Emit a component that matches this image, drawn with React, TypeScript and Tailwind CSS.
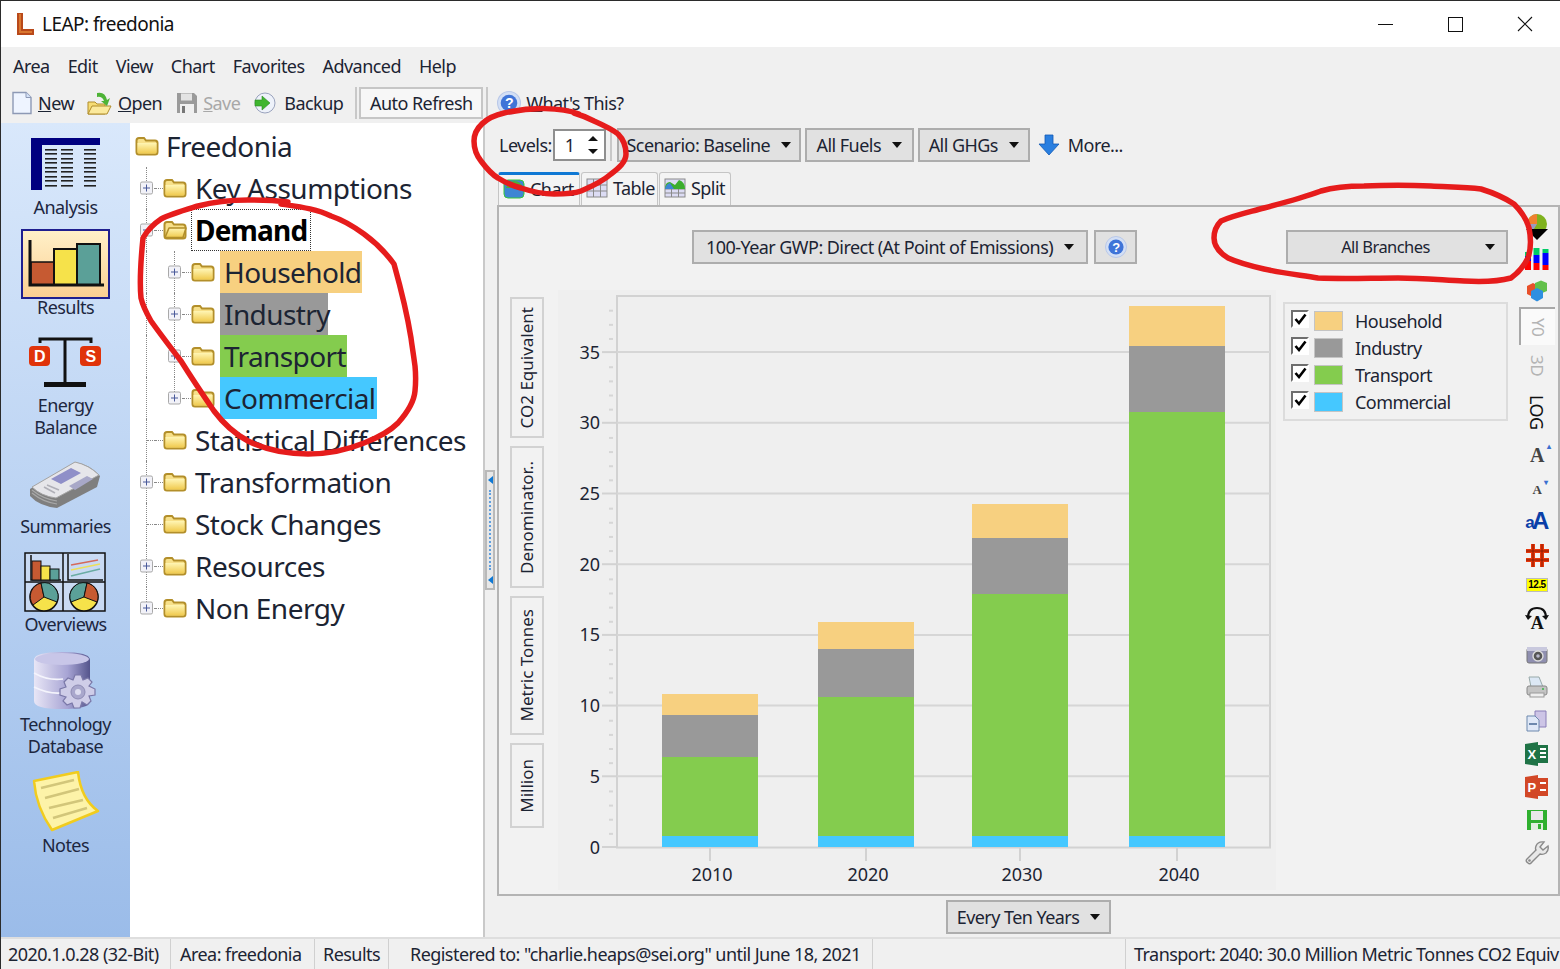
import React, { useId } from 'react';

const Caret = () => <span className="inline-block w-0 h-0 border-l-[5px] border-r-[5px] border-t-[6px] border-l-transparent border-r-transparent border-t-[#111]" />;

const Folder = ({ open = false }: { open?: boolean }) => {
  const id = useId();
  return (
    <svg width="24" height="20" viewBox="0 0 24 20" className="shrink-0">
      <defs>
        <linearGradient id={id} x1="0" y1="0" x2="0" y2="1">
          <stop offset="0" stopColor="#fff5b4" />
          <stop offset="1" stopColor="#f0ca4e" />
        </linearGradient>
      </defs>
      <path d="M1.5 4.5 Q1.5 2 4 2 H9 L11 4.5 H20 Q22.5 4.5 22.5 7 V16 Q22.5 18.5 20 18.5 H4 Q1.5 18.5 1.5 16 Z" fill="#f7e08a" stroke="#b38f2a" strokeWidth="2" />
      {open
        ? <path d="M2 17.5 L6 8 H23 L20 17.5 Z" fill={`url(#${id})`} stroke="#b38f2a" strokeWidth="1.6" strokeLinejoin="round" />
        : <path d="M2.5 7 H21.5 V16 Q21.5 17.5 20 17.5 H4 Q2.5 17.5 2.5 16 Z" fill={`url(#${id})`} />}
    </svg>
  );
};

const Expander = ({ minus = false }: { minus?: boolean }) => (
  <span className="absolute left-[1px] top-1/2 -translate-y-1/2 w-[13px] h-[13px] bg-[#f2f2f8] border border-[#a9a9a9] rounded-[2px] flex items-center justify-center">
    <span className="relative block w-[7px] h-[1px] bg-[#4a5a9a]">
      {!minus && <span className="absolute left-[3px] -top-[3px] block w-[1px] h-[7px] bg-[#4a5a9a]" />}
    </span>
  </span>
);

type Node = { label: string; expander?: boolean; minus?: boolean; bg?: string; last?: boolean };

const topNodes: Node[] = [
  { label: 'Statistical Differences' },
  { label: 'Transformation', expander: true },
  { label: 'Stock Changes' },
  { label: 'Resources', expander: true },
  { label: 'Non Energy', expander: true, last: true },
];

const subNodes: Node[] = [
  { label: 'Household', bg: 'bg-[#f7d080] w-[142px]' },
  { label: 'Industry', bg: 'bg-[#999999] w-[108px]' },
  { label: 'Transport', bg: 'bg-[#84cc4e] w-[127px]' },
  { label: 'Commercial', bg: 'bg-[#45c8ff] w-[157px]', last: true },
];

const Guide = ({ half = false, children }: { half?: boolean; children?: React.ReactNode }) => (
  <div className="relative w-[16px] h-full shrink-0">
    <span className={`absolute left-[7px] top-0 border-l border-dotted border-[#888] ${half ? 'h-1/2' : 'h-full'}`} />
    {children}
  </div>
);

const TopRow = ({ n }: { n: Node }) => (
  <div className="flex items-center h-[42px] pl-[9px]">
    <Guide half={n.last}>
      <span className="absolute left-[8px] top-1/2 w-[8px] border-t border-dotted border-[#888]" />
      {n.expander && <Expander minus={n.minus} />}
    </Guide>
    <span className="w-[8px] border-t border-dotted border-[#888]" />
    <Folder open={n.minus} />
    <span className="ml-[8px] text-[28px] leading-none tracking-[-0.5px] text-[#1c2433] whitespace-nowrap">{n.label}</span>
  </div>
);

const SubRow = ({ n }: { n: Node }) => (
  <div className="flex items-center h-[42px] pl-[9px]">
    <Guide />
    <span className="w-[12px] shrink-0" />
    <Guide half={n.last}>
      <span className="absolute left-[8px] top-1/2 w-[8px] border-t border-dotted border-[#888]" />
      <Expander />
    </Guide>
    <span className="w-[8px] border-t border-dotted border-[#888] shrink-0" />
    <Folder />
    <span className={`ml-[5px] h-[42px] pl-[4px] flex items-center text-[28px] tracking-[-0.6px] text-[#1c2433] whitespace-nowrap shrink-0 ${n.bg}`}>{n.label}</span>
  </div>
);

const Tree = () => (
  <div className="w-[355px] bg-white border-r-2 border-[#c9c9c9] pt-[2px] overflow-hidden shrink-0">
    <div className="flex items-center h-[42px] pl-[5px]">
      <Folder />
      <span className="ml-[7px] text-[28px] tracking-[-0.6px] text-[#1c2433]">Freedonia</span>
    </div>
    <TopRow n={{ label: 'Key Assumptions', expander: true }} />
    <div className="flex items-center h-[42px] pl-[9px]">
      <Guide>
        <span className="absolute left-[8px] top-1/2 w-[8px] border-t border-dotted border-[#888]" />
        <Expander minus />
      </Guide>
      <span className="w-[8px] border-t border-dotted border-[#888]" />
      <Folder open />
      <span className="ml-[4px] h-[42px] px-[3px] flex items-center text-[28px] font-bold tracking-[-0.8px] text-black border border-dotted border-[#333]">Demand</span>
    </div>
    {subNodes.map((n) => <SubRow key={n.label} n={n} />)}
    {topNodes.map((n) => <TopRow key={n.label} n={n} />)}
  </div>
);

const SideLabel = ({ children }: { children: React.ReactNode }) => (
  <span className="text-[18px] leading-[22px] text-[#1d2740] text-center">{children}</span>
);

const AnalysisIcon = () => (
  <svg width="70" height="52" viewBox="0 0 70 52">
    <path d="M0 0 H69 V7 H11 V52 H0 Z" fill="#000080" />
    {[14, 30, 53].map((x) => [11, 15, 20, 24, 29, 33, 38, 42, 47].map((y) => <rect key={`${x}-${y}`} x={x} y={y} width="12" height="1.6" fill="#222" />))}
  </svg>
);

const ResultsIcon = () => (
  <div className="w-[89px] h-[70px] border-2 border-[#1f1f8f] bg-gradient-to-b from-[#fff0c8] to-[#fbcf92] flex items-center justify-center">
    <svg width="76" height="48" viewBox="0 0 76 48">
      <rect x="3" y="22" width="23" height="23" fill="#c65a32" stroke="#111" strokeWidth="1.5" />
      <rect x="26" y="9" width="23" height="36" fill="#f6e24a" stroke="#111" strokeWidth="2" />
      <rect x="49" y="4" width="23" height="41" fill="#5ba098" stroke="#111" strokeWidth="2" />
      <path d="M2 0 V45 H76" fill="none" stroke="#111" strokeWidth="3" />
    </svg>
  </div>
);

const BalanceIcon = () => (
  <svg width="76" height="52" viewBox="0 0 76 52">
    <path d="M12 6 V2 H63 V6 M37 2 V46" fill="none" stroke="#111" strokeWidth="3" />
    <rect x="16" y="45" width="42" height="5" fill="#111" />
    <rect x="1" y="9" width="21" height="20" rx="4" fill="#e0330a" />
    <rect x="52" y="9" width="21" height="20" rx="4" fill="#e0330a" />
    <text x="11.5" y="25" textAnchor="middle" fontSize="16" fontWeight="700" fill="#fff" fontFamily="'Liberation Sans', sans-serif">D</text>
    <text x="62.5" y="25" textAnchor="middle" fontSize="16" fontWeight="700" fill="#fff" fontFamily="'Liberation Sans', sans-serif">S</text>
  </svg>
);

const NewsIcon = () => (
  <svg width="72" height="48" viewBox="0 0 72 48">
    <path d="M1 28 L46 1 Q60 3 71 15 L68 26 L28 47 Q10 45 1 35 Z" fill="#7f7f7f" />
    <path d="M3 26 L46 1 Q60 4 70 14 L27 37 Q12 35 3 26 Z" fill="#e6e6ea" stroke="#a4a4a4" />
    <path d="M22 18 L42 7 L52 12 L32 23 Z" fill="#8f8fc8" />
    <path d="M18 24 L30 29 M15 26 L26 32" stroke="#b0b0b8" strokeWidth="1.6" />
    <path d="M40 25 L58 15 L64 18 L46 29 Z" fill="#a8a8c8" />
    <path d="M3 32 Q14 41 28 43 M3 29 Q14 38 28 40" fill="none" stroke="#a9a9a9" strokeWidth="1.2" />
  </svg>
);

const OverviewIcon = () => (
  <svg width="82" height="60" viewBox="0 0 82 60">
    <rect x="1" y="1" width="80" height="58" fill="#c9daf3" stroke="#111" strokeWidth="1.5" />
    <path d="M39 1 V59 M1 30 H81" stroke="#111" strokeWidth="1.5" />
    <path d="M7 3 V28 H37" fill="none" stroke="#111" strokeWidth="1.5" />
    <rect x="8" y="9" width="9" height="19" fill="#c65a32" stroke="#111" />
    <rect x="17" y="14" width="9" height="14" fill="#f6e24a" stroke="#111" />
    <rect x="26" y="17" width="9" height="11" fill="#5ba098" stroke="#111" />
    <path d="M44 2 V28 H79" fill="none" stroke="#111" strokeWidth="1.5" />
    <path d="M47 13 L74 8" stroke="#d46a5a" strokeWidth="1.4" />
    <path d="M47 18 L76 12" stroke="#ecdf5a" strokeWidth="1.6" />
    <path d="M47 24 L76 17" stroke="#6aaca4" strokeWidth="1.4" />
    <circle cx="20" cy="45" r="14" fill="#f6e24a" stroke="#111" strokeWidth="1.5" />
    <path d="M20 45 L9 53 A14 14 0 0 1 17 31 Z" fill="#c65a32" stroke="#111" />
    <path d="M20 45 L17 31 A14 14 0 0 1 33 50 Z" fill="#5ba098" stroke="#111" />
    <circle cx="60" cy="45" r="14" fill="#f6e24a" stroke="#111" strokeWidth="1.5" />
    <path d="M60 45 L47 50 A14 14 0 0 1 63 31 Z" fill="#5ba098" stroke="#111" />
    <path d="M60 45 L63 31 A14 14 0 0 1 73 50 Z" fill="#c65a32" stroke="#111" />
  </svg>
);

const DatabaseIcon = () => {
  const id = useId();
  return (
    <svg width="66" height="60" viewBox="0 0 66 60">
      <defs>
        <linearGradient id={id} x1="0" y1="0" x2="1" y2="0">
          <stop offset="0" stopColor="#e8e6f6" />
          <stop offset="0.6" stopColor="#a7a4d4" />
          <stop offset="1" stopColor="#54548c" />
        </linearGradient>
      </defs>
      <path d="M1 9 Q1 1 29 1 Q57 1 57 9 V50 Q57 58 29 58 Q1 58 1 50 Z" fill={`url(#${id})`} />
      <ellipse cx="29" cy="8" rx="27" ry="6" fill="#c8c6e8" />
      <path d="M1 22 Q15 30 30 28 M1 36 Q15 43 28 42" fill="none" stroke="#f4f4fc" strokeWidth="1.6" />
      <path d="M42 24 L48 24 L50 29 L55 27 L59 31 L56 35 L62 38 L62 44 L56 45 L58 50 L54 54 L49 51 L47 57 L41 57 L39 52 L34 54 L30 50 L33 46 L27 44 L27 38 L33 36 L31 31 L35 27 L40 29 Z" fill="#cfcde8" stroke="#7a78a8" strokeWidth="1.2" />
      <circle cx="45" cy="41" r="7" fill="#a9a7cc" stroke="#8e8cb4" />
      <circle cx="45" cy="41" r="3" fill="#ddddf0" />
    </svg>
  );
};

const NotesIcon = () => (
  <svg width="68" height="62" viewBox="0 0 68 62">
    <path d="M2 10 L46 1 Q49 28 66 40 L20 59 Q4 36 2 10 Z" fill="#fdf3a8" stroke="#f1cc1e" strokeWidth="2.5" strokeLinejoin="round" />
    {[[9, 17, 42, 9], [13, 27, 47, 18], [17, 37, 51, 29], [21, 47, 55, 37]].map(([a, b, c, d]) => <path key={a} d={`M${a} ${b} L${c} ${d}`} stroke="#d2c67a" strokeWidth="2.6" />)}
  </svg>
);

const Sidebar = () => (
  <div className="w-[129px] shrink-0 bg-gradient-to-b from-[#d9e8fb] to-[#9bbce9] flex flex-col items-center">
    <div className="mt-[15px] flex flex-col items-center gap-[6px]"><AnalysisIcon /><SideLabel>Analysis</SideLabel></div>
    <div className="mt-[11px] flex flex-col items-center"><ResultsIcon /><span className="-mt-[2px] h-[20px] flex items-center"><SideLabel>Results</SideLabel></span></div>
    <div className="mt-[20px] flex flex-col items-center gap-[5px]"><BalanceIcon /><SideLabel>Energy<br />Balance</SideLabel></div>
    <div className="mt-[23px] flex flex-col items-center gap-[6px]"><NewsIcon /><SideLabel>Summaries</SideLabel></div>
    <div className="mt-[15px] flex flex-col items-center gap-[1px]"><OverviewIcon /><SideLabel>Overviews</SideLabel></div>
    <div className="mt-[16px] flex flex-col items-center gap-[2px]"><DatabaseIcon /><SideLabel>Technology<br />Database</SideLabel></div>
    <div className="mt-[14px] flex flex-col items-center gap-[1px]"><NotesIcon /><SideLabel>Notes</SideLabel></div>
  </div>
);

const NewFileIcon = () => (
  <svg width="22" height="24" viewBox="0 0 22 24"><path d="M2 1.5 H15 L20 6.5 V22.5 H2 Z" fill="#eef4ff" stroke="#8d99b5" strokeWidth="1.4" /><path d="M15 1.5 V6.5 H20" fill="#d5e2f8" stroke="#8d99b5" /></svg>
);
const OpenIcon = () => (
  <svg width="26" height="26" viewBox="0 0 26 26">
    <path d="M1 24 V12 H8 L10 14 H18 V24 Z" fill="#f6dc74" stroke="#b08d2c" />
    <path d="M1 24 L5 16 H24 L20 24 Z" fill="#fbe99c" stroke="#b08d2c" />
    <path d="M10 3 Q18 1 20 10 L23 8 L20 16 L14 11 L17 11 Q15 6 10 7 Z" fill="#4db336" />
  </svg>
);
const SaveIcon = () => (
  <svg width="22" height="22" viewBox="0 0 22 22"><path d="M1 1 H18 L21 4 V21 H1 Z" fill="#9a9a9a" /><rect x="5" y="1.5" width="11" height="7" fill="#e3e3e3" /><rect x="4" y="12" width="14" height="9" fill="#f0f0f0" /><rect x="6" y="14" width="3" height="7" fill="#777" /></svg>
);
const BackupIcon = () => (
  <svg width="22" height="22" viewBox="0 0 22 22" className="mr-[3px]"><circle cx="11" cy="11" r="10" fill="#eef2fa" stroke="#9aa3bd" /><path d="M1 8 H8 V4 L16 11 L8 18 V14 H1 Z" fill="#3fb52f" stroke="#2b8a24" strokeWidth="0.6" /></svg>
);
const HelpIcon = ({ size = 22 }: { size?: number }) => (
  <svg width={size} height={size} viewBox="0 0 22 22">
    <circle cx="11" cy="11" r="10.5" fill="#d3dff5" stroke="#b9c8e8" />
    <circle cx="11" cy="11" r="7.6" fill="#3f74d8" />
    <text x="11" y="15.5" textAnchor="middle" fontSize="13" fontWeight="700" fill="#fff" fontFamily="'Liberation Sans', sans-serif">?</text>
  </svg>
);

const ToolBtn = ({ icon, label, u, disabled = false }: { icon: React.ReactNode; label: string; u?: boolean; disabled?: boolean }) => (
  <div className={`flex items-center gap-[5px] ${disabled ? 'text-[#a8a8a8]' : 'text-[#1c2433]'}`}>
    {icon}
    <span className="whitespace-nowrap">{u ? <><span className="underline">{label[0]}</span>{label.slice(1)}</> : label}</span>
  </div>
);

const Combo = ({ label, className, gap = 'gap-[11px]' }: { label: string; className: string; gap?: string }) => (
  <div className={`flex items-center justify-center ${gap} bg-[#e1e1e1] border-2 border-[#adadad] text-[#1c2433] whitespace-nowrap shrink-0 ${className}`}>
    <span>{label}</span>
    <Caret />
  </div>
);

const TabIcon = ({ kind }: { kind: 'chart' | 'table' | 'split' }) => {
  if (kind === 'table') {
    return (
      <svg width="22" height="20" viewBox="0 0 22 20">
        <rect x="1" y="1" width="20" height="18" fill="#dcdcf4" stroke="#8a8a8a" />
        <path d="M7.5 1 V19 M14.5 1 V19 M1 7 H21 M1 13 H21" stroke="#8a8a8a" />
      </svg>
    );
  }
  if (kind === 'split') {
    return (
      <svg width="22" height="20" viewBox="0 0 22 20">
        <rect x="1" y="1" width="20" height="18" fill="#dcdcf4" stroke="#8a8a8a" />
        <path d="M1 11 H21 M7.5 11 V19 M14.5 11 V19 M1 15 H21" stroke="#8a8a8a" />
        <path d="M1 11 Q1 4 6 4 L11 7 L15 2 Q21 4 21 11 Z" fill="#3cae2e" />
        <path d="M1 11 Q2 6 6 5 L10 11 Z" fill="#3e86d4" />
      </svg>
    );
  }
  return (
    <svg width="22" height="20" viewBox="0 0 22 20">
      <rect x="1" y="1" width="20" height="18" rx="4" fill="#3e86d4" stroke="#38c838" />
      <path d="M3 9 Q5 2 11 2 Q18 2 20 9 Z" fill="#4fb03a" />
    </svg>
  );
};

const Tab = ({ kind, label, active = false, className }: { kind: 'chart' | 'table' | 'split'; label: string; active?: boolean; className: string }) => (
  <div className={`relative flex items-center gap-[5px] h-[33px] pl-[4px] pb-[3px] border border-b-0 border-[#c5c5c5] bg-[#f4f4f4] rounded-t-[3px] text-[#1c2433] ${active ? 'border-t-[3px] border-t-[#0f78d4]' : ''} ${className}`}>
    <TabIcon kind={kind} />
    <span>{label}</span>
  </div>
);

const AxisBtn = ({ label, className }: { label: string; className: string }) => (
  <div className={`w-[34px] flex items-center justify-center bg-[#f2f2f2] border-2 border-[#d2d2d2] text-[#1c2433] ${className}`}>
    <span className="[writing-mode:vertical-rl] rotate-180 whitespace-nowrap text-[17px] tracking-[0px]">{label}</span>
  </div>
);

const bars = [
  { x: 662, year: '2010', ys: [694, 715, 757, 836, 847] },
  { x: 818, year: '2020', ys: [622, 649, 697, 836, 847] },
  { x: 972, year: '2030', ys: [504, 538, 594, 836, 847] },
  { x: 1129, year: '2040', ys: [306, 346, 412, 836, 847] },
];
const seriesColors = ['#f7d080', '#999999', '#84cc4e', '#45c8ff'];
const yTicks = [0, 5, 10, 15, 20, 25, 30, 35];
const yPos = (v: number) => 847 - v * 14.14;

const Chart = () => (
  <svg width="718" height="600" viewBox="558 290 718 600" className="shrink-0 bg-[#efefef] tracking-[0px]" fontFamily="'Noto Sans', sans-serif">
    <rect x="617" y="296" width="653" height="551.5" fill="none" stroke="#d2d2d2" strokeWidth="2" />
    {yTicks.map((v) => (
      <g key={v}>
        {v > 0 && <line x1="617" x2="1270" y1={yPos(v)} y2={yPos(v)} stroke="#d6d6d6" strokeWidth="2" />}
        <line x1="602" x2="617" y1={yPos(v)} y2={yPos(v)} stroke="#d2d2d2" strokeWidth="2" />
        <text x="600" y={yPos(v) + 6.5} textAnchor="end" fontSize="18" fill="#1c2433">{v}</text>
        {v < 35 && [1, 2, 3, 4].map((m) => <rect key={m} x="609" y={yPos(v + m)} width="4" height="2" fill="#d6d6d6" />)}
      </g>
    ))}
    {[36, 37, 38].map((v) => <rect key={v} x="609" y={yPos(v)} width="4" height="2" fill="#d6d6d6" />)}
    {bars.map((b) => (
      <g key={b.year}>
        {seriesColors.map((c, i) => <rect key={c} x={b.x} y={b.ys[i]} width="96" height={b.ys[i + 1] - b.ys[i]} fill={c} />)}
        <line x1={b.x + 48} x2={b.x + 48} y1="848" y2="861" stroke="#d2d2d2" strokeWidth="2" />
        <text x={b.x + 50} y="881" textAnchor="middle" fontSize="18" fill="#1c2433">{b.year}</text>
      </g>
    ))}
  </svg>
);

const legend = ['Household', 'Industry', 'Transport', 'Commercial'];

const Legend = () => (
  <div className="ml-[7px] mt-[12px] w-[225px] h-[119px] border-2 border-[#dcdcdc] bg-[#f1f1f1] pl-[6px] flex flex-col justify-center shrink-0">
    {legend.map((l, i) => (
      <div key={l} className="flex items-center h-[27px]">
        <span className="w-[18px] h-[18px] border-2 border-t-[#6e6e6e] border-l-[#6e6e6e] border-r-white border-b-white bg-white flex items-center justify-center -translate-y-[2px]">
          <svg width="13" height="12" viewBox="0 0 13 12"><path d="M1.5 6 L5 10 L11.5 1.5" fill="none" stroke="#000" strokeWidth="2.6" /></svg>
        </span>
        <span className={`ml-[5px] w-[29px] h-[20px] border border-[#c4c4c4] ${['bg-[#f7d080]', 'bg-[#999999]', 'bg-[#84cc4e]', 'bg-[#45c8ff]'][i]}`} />
        <span className="ml-[12px] text-[#1c2433]">{l}</span>
      </div>
    ))}
  </div>
);

const SideTool = ({ className, children }: { className: string; children: React.ReactNode }) => (
  <div className={`flex items-center justify-center shrink-0 ${className}`}>{children}</div>
);

const SideToolbar = () => (
  <div className="w-[42px] shrink-0 flex flex-col items-center pt-[4px] text-[#222]">
    <SideTool className="h-[32px]">
      <svg width="26" height="28" viewBox="0 0 26 28">
        <circle cx="13" cy="11" r="10" fill="#7fb21e" />
        <path d="M13 11 L13 1 A10 10 0 0 0 3 11 Z" fill="#f08030" />
        <path d="M3 11 A10 10 0 0 0 8 19 L13 11 Z" fill="#9a9ac0" />
        <path d="M2 16 H24 L13 27 Z" fill="#000" />
      </svg>
    </SideTool>
    <SideTool className="h-[32px]">
      <svg width="26" height="24" viewBox="0 0 26 24">
        <rect x="1" y="14" width="6" height="9" fill="#f00" /><rect x="1" y="9" width="6" height="5" fill="#00f" /><rect x="1" y="5" width="6" height="4" fill="#0c6" />
        <rect x="9.5" y="16" width="6" height="7" fill="#f00" /><rect x="9.5" y="8" width="6" height="8" fill="#00f" /><rect x="9.5" y="1" width="6" height="7" fill="#0c6" />
        <rect x="18.5" y="18" width="6" height="5" fill="#f00" /><rect x="18.5" y="6" width="6" height="12" fill="#00f" /><rect x="18.5" y="2" width="6" height="4" fill="#0c6" />
      </svg>
    </SideTool>
    <SideTool className="h-[32px]">
      <svg width="24" height="22" viewBox="0 0 24 22">
        <path d="M2 6 L8 3 L14 6 V14 L8 17 L2 14 Z" fill="#e8502a" />
        <path d="M10 3 L16 0.5 L22 3 V11 L16 13.5 L10 11 Z" fill="#62c04a" />
        <path d="M6 11 L12 8 L18 11 V18 L12 21.5 L6 18 Z" fill="#2f8fe0" />
      </svg>
    </SideTool>
    <div className="w-[36px] h-[38px] border-l-2 border-t-2 border-[#a8a8a8] bg-[#fafafa] flex items-center justify-center text-[#b4b4b4] text-[17px] shrink-0">
      <span className="[writing-mode:vertical-rl] leading-none">Y0</span>
    </div>
    <SideTool className="h-[42px] text-[#b4b4b4] text-[17px]"><span className="[writing-mode:vertical-rl] leading-none">3D</span></SideTool>
    <SideTool className="h-[50px] text-[#111] text-[18px]"><span className="[writing-mode:vertical-rl] leading-none">LOG</span></SideTool>
    <SideTool className="h-[36px] font-bold text-[20px] [font-family:'Liberation_Serif',serif]">
      <span className="relative leading-none text-[#444]">A<span className="absolute -right-[6px] -top-[2px] text-[8px] text-[#3a6fd0]">▴</span></span>
    </SideTool>
    <SideTool className="h-[33px] font-bold text-[13px] [font-family:'Liberation_Serif',serif]">
      <span className="relative leading-none text-[#444]">A<span className="absolute -right-[6px] -top-[4px] text-[8px] text-[#3a6fd0]">▾</span></span>
    </SideTool>
    <SideTool className="h-[33px] text-[#0a3fa8] font-bold [font-family:'Liberation_Sans',sans-serif]">
      <span className="text-[17px] leading-none">a</span><span className="text-[24px] leading-none -ml-[2px] -mt-[3px]">A</span>
    </SideTool>
    <SideTool className="h-[33px]">
      <svg width="25" height="25" viewBox="0 0 25 25"><path d="M8 1 V24 M17 1 V24 M1 8 H24 M1 17 H24" stroke="#e8380c" strokeWidth="4" /><path d="M8 1 V24 M17 1 V24 M1 8 H24 M1 17 H24" stroke="#8a1a00" strokeWidth="1" /></svg>
    </SideTool>
    <SideTool className="h-[26px]">
      <span className="bg-[#ffff00] border border-[#bbb] text-[10px] leading-[12px] font-bold text-black px-[1px] [font-family:'Liberation_Sans',sans-serif]">12.5</span>
    </SideTool>
    <SideTool className="h-[42px]">
      <svg width="26" height="28" viewBox="0 0 26 28">
        <path d="M4 13 Q4 3 13 3 Q22 3 22 13" fill="none" stroke="#111" strokeWidth="2.2" />
        <path d="M1 10 L4 15 L8 11 Z M18 11 L22 15 L25 10 Z" fill="#111" />
        <text x="13" y="24" textAnchor="middle" fontSize="18" fontWeight="700" fill="#111" fontFamily="'Liberation Serif', serif">A</text>
      </svg>
    </SideTool>
    <SideTool className="h-[30px]">
      <svg width="22" height="20" viewBox="0 0 22 20"><rect x="1" y="3" width="20" height="15" rx="2" fill="#8f8fb0" stroke="#777" /><rect x="1" y="2" width="20" height="4" fill="#c9c9de" /><circle cx="12" cy="11" r="5" fill="#555" stroke="#ddd" strokeWidth="1.4" /><circle cx="12" cy="11" r="1.8" fill="#b8b8cc" /></svg>
    </SideTool>
    <SideTool className="h-[34px]">
      <svg width="22" height="22" viewBox="0 0 22 22"><path d="M5 11 L3 1 H13 L17 11 Z" fill="#dce8f5" stroke="#9aa" /><rect x="1" y="10" width="20" height="9" rx="2" fill="#c4c4c4" stroke="#888" /><rect x="4" y="17" width="14" height="4" fill="#eee" stroke="#999" /><circle cx="17" cy="13" r="1" fill="#3cb54a" /></svg>
    </SideTool>
    <SideTool className="h-[33px]">
      <svg width="22" height="22" viewBox="0 0 22 22"><path d="M9 1 H20 V17 H9 Z" fill="#cdc5e6" stroke="#8a7fb8" /><path d="M1 6 H9 L13 10 V21 H1 Z" fill="#dfe8f7" stroke="#6d88ad" /><rect x="3" y="13" width="8" height="2" fill="#6d88ad" /></svg>
    </SideTool>
    <SideTool className="h-[33px]">
      <svg width="24" height="24" viewBox="0 0 24 24">
        <rect x="10" y="3" width="13" height="18" fill="#1f7346" />
        <path d="M15 7 H21 M15 11 H21 M15 15 H21" stroke="#fff" strokeWidth="2" />
        <path d="M0 2 L13 0 V24 L0 22 Z" fill="#1f7346" />
        <text x="6.5" y="17" textAnchor="middle" fontSize="13" fontWeight="700" fill="#fff" fontFamily="'Liberation Sans', sans-serif">X</text>
      </svg>
    </SideTool>
    <SideTool className="h-[33px]">
      <svg width="24" height="24" viewBox="0 0 24 24">
        <rect x="10" y="3" width="13" height="18" fill="#d24726" />
        <path d="M15 8 H21 M15 15 H21" stroke="#fff" strokeWidth="2" />
        <path d="M0 2 L13 0 V24 L0 22 Z" fill="#d24726" />
        <text x="6.5" y="17" textAnchor="middle" fontSize="13" fontWeight="700" fill="#fff" fontFamily="'Liberation Sans', sans-serif">P</text>
      </svg>
    </SideTool>
    <SideTool className="h-[33px]">
      <svg width="22" height="22" viewBox="0 0 22 22"><path d="M1 1 H21 V21 H1 Z" fill="#2fb02f" /><rect x="5" y="2" width="12" height="9" fill="#e8e8e8" /><rect x="5" y="14" width="12" height="7" fill="#dfeedd" /><rect x="12" y="15" width="3" height="5" fill="#2fb02f" /></svg>
    </SideTool>
    <SideTool className="h-[33px]">
      <svg width="24" height="24" viewBox="0 0 24 24"><path d="M23 5 L18 9 L15 6 L19 1 Q13 0 11 5 Q10 8 11 9 L2 18 Q0 20 3 22 Q5 24 7 21 L15 13 Q18 14 21 12 Q24 9 23 5 Z" fill="#e8e8e8" stroke="#8a8a8a" strokeWidth="1.4" /><circle cx="4.5" cy="19.5" r="1.3" fill="#8a8a8a" /></svg>
    </SideTool>
  </div>
);

const Splitter = () => (
  <div className="w-[12px] shrink-0 flex items-center">
    <div className="w-[10px] h-[120px] border-2 border-[#b9b9b9] bg-[#e8e8e8] flex flex-col items-center justify-between py-[4px]">
      <span className="w-0 h-0 border-y-[4px] border-r-[5px] border-y-transparent border-r-[#0f78d4]" />
      <span className="h-[80px] border-l-2 border-dotted border-[#5f9fe0]" />
      <span className="w-0 h-0 border-y-[4px] border-r-[5px] border-y-transparent border-r-[#0f78d4]" />
    </div>
  </div>
);

// red pen marks someone drew over the screenshot
const Annotations = () => (
  <svg width="1560" height="969" viewBox="0 0 1560 969" className="absolute left-0 top-0 pointer-events-none" fill="none" stroke="#e61c1c" strokeWidth="5.5" strokeLinecap="round" strokeLinejoin="round">
    <path d="M578 113 C560 106 530 106 503 112 C485 116 473 127 473 140 C473 150 476 155 480 160 C486 168 490 173 497 177 C505 182 512 185 520 187 C532 191 542 193 553 193 C563 193 572 193 580 190 C592 185 602 180 610 173 C618 167 625 161 625 153 C625 145 622 138 617 133 C611 128 602 124 593 120 C587 117 580 114 573 112" />
    <path d="M287 201 C270 199 258 199 247 199 C228 199 212 201 197 205 C184 209 170 213 160 218 C151 224 146 230 142 237 C140 257 138 277 140 297 C142 306 146 313 150 320 C160 334 170 347 180 360 C190 376 200 391 213 410 C222 422 234 433 247 440 C265 449 285 453 307 453 C328 453 346 449 363 442 C376 437 388 431 397 422 C405 413 413 402 414 390 C415 380 415 375 414 365 C412 350 411 345 410 337 C406 312 400 288 393 263 C385 252 374 241 363 233 C352 225 342 219 330 215 C316 208 300 206 280 203" />
    <path d="M1320 190 C1334 186 1348 185 1363 185 C1386 184 1408 184 1430 185 C1448 186 1464 186 1480 188 C1493 192 1504 197 1513 203 C1521 211 1526 219 1528 227 C1530 237 1530 248 1527 257 C1523 265 1517 272 1510 277 C1495 281 1480 281 1463 280 C1441 279 1420 277 1397 277 C1370 277 1344 278 1317 277 C1299 274 1281 272 1263 268 C1250 265 1238 262 1227 257 C1219 252 1213 245 1213 237 C1213 230 1216 224 1220 220 C1234 214 1249 211 1263 207 C1282 202 1301 197 1320 190" />
  </svg>
);

const App: React.FC = () => {
  return (
    <div className="relative w-[1560px] h-[969px] overflow-hidden flex flex-col bg-[#f0f0f0] border-l border-t border-[#2b2b2b] text-[18px] leading-[24px] tracking-[-0.55px] text-[#1c2433] [font-family:'Noto_Sans',sans-serif]">
      <div className="h-[46px] bg-white flex items-center shrink-0">
        <svg width="20" height="24" viewBox="0 0 20 24" className="ml-[14px]">
          <path d="M2 1 H8 V17 H19 V23 H2 Z" fill="#b9491a" />
          <path d="M4 2 H6 V19 H17 V21 H4 Z" fill="#d9762f" />
        </svg>
        <span className="ml-[7px] text-[19px] text-[#111]">LEAP: freedonia</span>
        <div className="ml-auto flex items-center">
          <span className="w-[70px] flex justify-center"><span className="w-[15px] border-t border-[#111]" /></span>
          <span className="w-[70px] flex justify-center"><span className="w-[15px] h-[15px] border border-[#111]" /></span>
          <span className="w-[70px] flex justify-center">
            <svg width="16" height="16" viewBox="0 0 16 16"><path d="M1 1 L15 15 M15 1 L1 15" stroke="#111" strokeWidth="1.1" /></svg>
          </span>
        </div>
      </div>

      <div className="h-[38px] flex items-center gap-[18px] pl-[12px] shrink-0">
        {['Area', 'Edit', 'View', 'Chart', 'Favorites', 'Advanced', 'Help'].map((m) => <span key={m}>{m}</span>)}
      </div>

      <div className="h-[38px] pb-[2px] flex items-center pl-[10px] shrink-0">
        <ToolBtn icon={<NewFileIcon />} label="New" u />
        <div className="ml-[13px]"><ToolBtn icon={<OpenIcon />} label="Open" u /></div>
        <div className="ml-[14px]"><ToolBtn icon={<SaveIcon />} label="Save" u disabled /></div>
        <div className="ml-[14px]"><ToolBtn icon={<BackupIcon />} label="Backup" /></div>
        <span className="ml-[12px] h-[32px] border-l-2 border-[#c8c8c8]" />
        <div className="ml-[2px] w-[124px] h-[32px] border-2 border-[#c6c6c6] bg-[#f7f7f7] flex items-center justify-center">Auto Refresh</div>
        <span className="ml-[3px] h-[32px] border-l-2 border-[#c8c8c8]" />
        <div className="ml-[9px]"><ToolBtn icon={<HelpIcon size={24} />} label="What's This?" u /></div>
      </div>

      <div className="flex-1 flex min-h-0">
        <Sidebar />
        <Tree />
        <Splitter />
        <div className="flex-1 min-w-0 flex flex-col">
          <div className="h-[49px] pb-[6px] flex items-center shrink-0 pl-[2px]">
            <span>Levels:</span>
            <div className="ml-[1px] w-[53px] h-[32px] bg-white border-2 border-[#8f8f8f] flex items-center justify-between pl-[10px] pr-[6px]">
              <span>1</span>
              <span className="flex flex-col gap-[8px]">
                <span className="block w-0 h-0 border-l-[5px] border-r-[5px] border-b-[5px] border-l-transparent border-r-transparent border-b-[#111]" />
                <span className="block w-0 h-0 border-l-[5px] border-r-[5px] border-t-[5px] border-l-transparent border-r-transparent border-t-[#111]" />
              </span>
            </div>
            <span className="ml-[4px] h-[32px] border-l-2 border-[#c8c8c8]" />
            <Combo label="Scenario: Baseline" className="ml-[5px] w-[184px] h-[34px]" />
            <Combo label="All Fuels" className="ml-[4px] w-[109px] h-[34px]" />
            <Combo label="All GHGs" className="ml-[4px] w-[112px] h-[34px]" />
            <svg width="22" height="22" viewBox="0 0 22 22" className="ml-[8px]"><path d="M7 1 H15 V10 H21 L11 21 L1 10 H7 Z" fill="#2a7fe0" stroke="#1259b4" strokeWidth="0.8" /></svg>
            <span className="ml-[8px]">More...</span>
          </div>
          <div className="h-[33px] flex items-end gap-[1px] pl-[1px] shrink-0">
            <Tab kind="chart" label="Chart" active className="w-[82px]" />
            <Tab kind="table" label="Table" className="w-[77px]" />
            <Tab kind="split" label="Split" className="w-[72px]" />
          </div>
          <div className="h-[691px] border-2 border-[#b4b4b4] bg-[#f2f2f2] flex shrink-0">
            <div className="flex-1 min-w-0">
              <div className="h-[83px] flex items-start pt-[23px]">
                <Combo label="100-Year GWP: Direct (At Point of Emissions)" className="ml-[193px] w-[396px] h-[34px]" />
                <div className="ml-[6px] w-[43px] h-[34px] bg-[#e1e1e1] border-2 border-[#adadad] flex items-center justify-center"><HelpIcon /></div>
                <Combo label="All Branches" gap="gap-[55px]" className="ml-[149px] w-[222px] h-[34px] text-[16.5px] pl-[42px]" />
              </div>
              <div className="flex">
                <div className="ml-[11px] w-[34px] flex flex-col gap-[8px] pt-[7px] shrink-0">
                  <AxisBtn label="CO2 Equivalent" className="h-[141px]" />
                  <AxisBtn label="Denominator.." className="h-[142px]" />
                  <AxisBtn label="Metric Tonnes" className="h-[139px]" />
                  <AxisBtn label="Million" className="h-[85px]" />
                </div>
                <div className="ml-[14px]"><Chart /></div>
                <Legend />
              </div>
            </div>
            <SideToolbar />
          </div>
          <div className="flex-1 flex items-center justify-center">
            <Combo label="Every Ten Years" className="w-[165px] h-[34px]" />
          </div>
        </div>
      </div>

      <div className="h-[32px] shrink-0 flex items-center border-t-2 border-[#dedede] whitespace-nowrap overflow-hidden">
        <span className="pl-[7px] w-[170px] shrink-0 border-r border-[#d0d0d0] h-full flex items-center">2020.1.0.28 (32-Bit)</span>
        <span className="pl-[9px] w-[144px] shrink-0 border-r border-[#d0d0d0] h-full flex items-center">Area: freedonia</span>
        <span className="pl-[8px] w-[74px] shrink-0 border-r border-[#d0d0d0] h-full flex items-center">Results</span>
        <span className="pl-[21px] w-[484px] shrink-0 border-r border-[#d0d0d0] h-full flex items-center">Registered to: "charlie.heaps@sei.org" until June 18, 2021</span>
        <span className="ml-[252px] pl-[8px] w-[440px] shrink-0 border-l border-[#d0d0d0] h-full flex items-center">Transport: 2040: 30.0 Million Metric Tonnes CO2 Equiv</span>
      </div>

      <Annotations />
    </div>
  );
};

export default App;
